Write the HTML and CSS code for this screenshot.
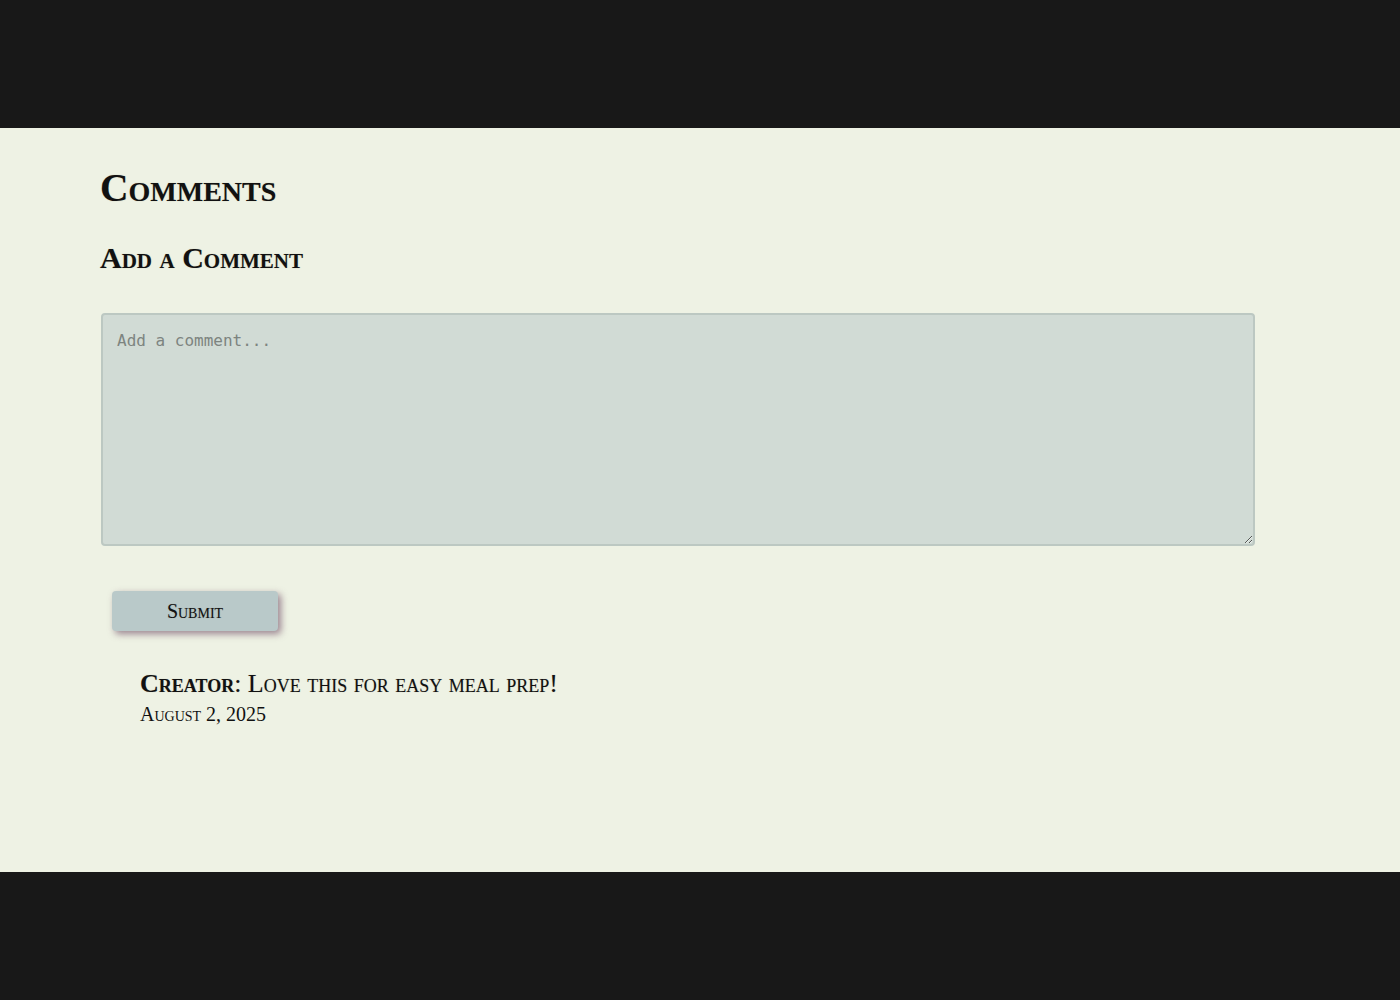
FILE: index.html
```html
<!DOCTYPE html>
<html>
<head>
<meta charset="utf-8">
<link rel="stylesheet" href="styles.css">
</head>
<body>
<header class="top-bar"></header>
<main class="content">
  <section class="comments">
    <h1 class="title">Comments</h1>
    <h2 class="subtitle">Add a Comment</h2>
    <form class="comment-form">
      <textarea class="comment-input" placeholder="Add a comment..."></textarea>
      <button type="button" class="submit-btn">Submit</button>
    </form>
    <ul class="comment-list">
      <li class="comment">
        <p class="comment-text"><strong>Creator</strong>: Love this for easy meal prep!</p>
        <p class="comment-date">August 2, 2025</p>
      </li>
    </ul>
  </section>
</main>
<footer class="bottom-bar"></footer>
</body>
</html>
```

FILE: styles.css
```css
html, body {
  margin: 0;
  padding: 0;
  background: #181818;
}
body {
  font-family: "Liberation Serif", "DejaVu Serif", serif;
  font-variant: small-caps;
  color: #111;
}
.top-bar {
  height: 128px;
  background: #181818;
}
.bottom-bar {
  height: 128px;
  background: #181818;
}
.content {
  background: #eef2e4;
  height: 744px;
  box-sizing: border-box;
  padding: 0 146px 0 100px;
}
.comments {
  padding-top: 36px;
}
.title {
  margin: 0;
  font-size: 39.5px;
  font-weight: bold;
  line-height: 48px;
  text-shadow: 0 0 1px rgba(80, 60, 20, 0.35);
}
.subtitle {
  margin: 28px 0 0;
  font-size: 30px;
  font-weight: bold;
  line-height: 36px;
  text-shadow: 0 0 1px rgba(80, 60, 20, 0.35);
}
.comment-form {
  margin-top: 37px;
  display: flex;
  flex-direction: column;
  align-items: flex-start;
}
.comment-input {
  width: 1154px;
  height: 233px;
  box-sizing: border-box;
  margin: 0 0 0 1px;
  padding: 15px 14px;
  background: #d1dbd5;
  border: 2px solid #bcc8c2;
  border-radius: 4px;
  font-family: "DejaVu Sans Mono", monospace;
  font-variant: normal;
  font-size: 16px;
  line-height: 22px;
  color: #333;
  resize: vertical;
}
.comment-input::placeholder {
  color: #7d8480;
}
.submit-btn {
  margin: 45px 0 0 12px;
  width: 166px;
  height: 40px;
  background: #b9c9c9;
  border: none;
  border-radius: 4px;
  box-shadow: 3px 3px 7px rgba(100, 60, 90, 0.6);
  font-family: "Liberation Serif", serif;
  font-variant: small-caps;
  font-size: 20px;
  color: #111;
  text-shadow: 0 0 1px rgba(60, 40, 20, 0.3);
  cursor: pointer;
}
.comment-list {
  list-style: none;
  margin: 37px 0 0;
  padding: 0 0 0 40px;
}
.comment-text {
  margin: 0;
  font-size: 26px;
  line-height: 32px;
  text-shadow: 0 0 1px rgba(60, 40, 20, 0.3);
}
.comment-text strong {
  font-weight: bold;
}
.comment-date {
  margin: 0;
  font-size: 20px;
  line-height: 28px;
}
```
